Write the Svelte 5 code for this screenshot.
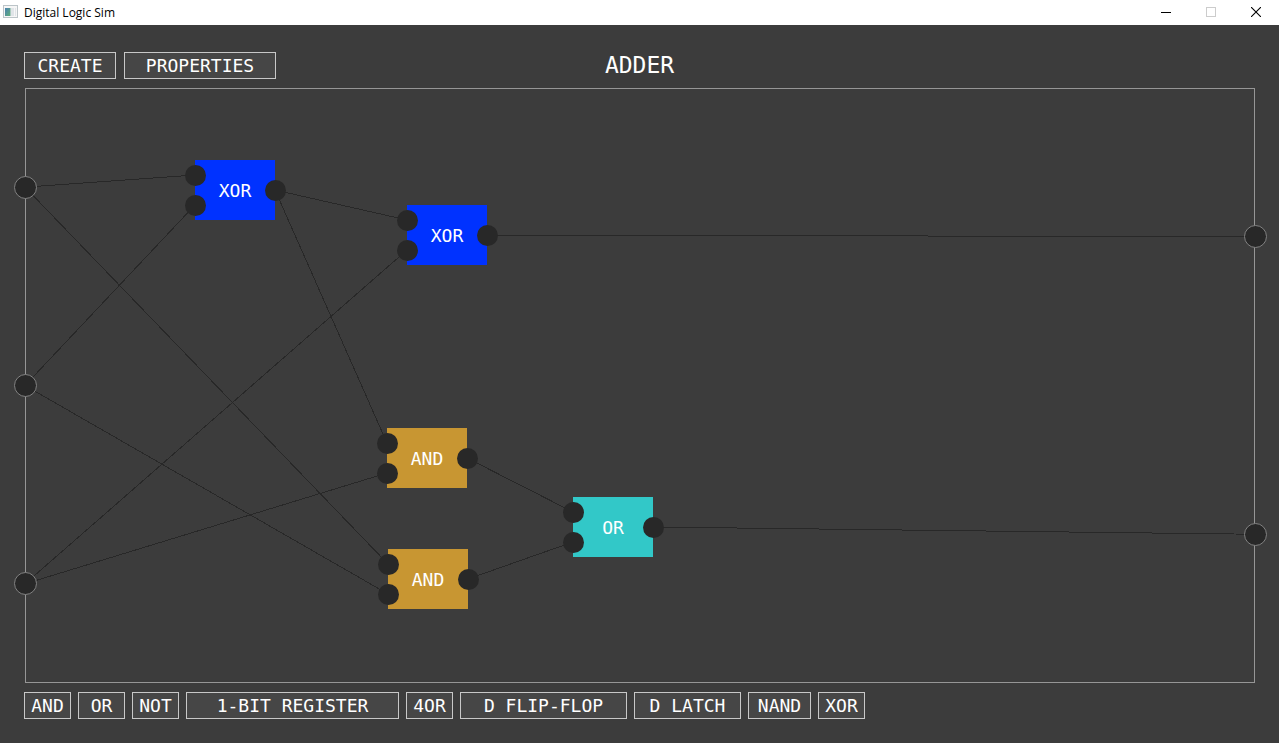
<script>
  const topButtons = [
    { label: 'CREATE', width: 92 },
    { label: 'PROPERTIES', width: 152 }
  ];

  const chips = [
    { label: 'AND', width: 47 },
    { label: 'OR', width: 47 },
    { label: 'NOT', width: 47 },
    { label: '1-BIT REGISTER', width: 213 },
    { label: '4OR', width: 47 },
    { label: 'D FLIP-FLOP', width: 167 },
    { label: 'D LATCH', width: 107 },
    { label: 'NAND', width: 63 },
    { label: 'XOR', width: 47 }
  ];

  const gates = [
    { id: 'xor1', label: 'XOR', kind: 'xor', x: 170, y: 72 },
    { id: 'xor2', label: 'XOR', kind: 'xor', x: 382, y: 117 },
    { id: 'and1', label: 'AND', kind: 'and', x: 362, y: 340 },
    { id: 'and2', label: 'AND', kind: 'and', x: 363, y: 461 },
    { id: 'or1', label: 'OR', kind: 'or', x: 548, y: 409 }
  ];

  const inputs = ['Input 1', 'Input 2', 'Input 3'];
  const outputs = ['Output 1', 'Output 2'];

  // Each end is either a board terminal ("in:n", "out:n") or a gate pin ("gate:a|b|q").
  const wires = [
    ['in:0', 'xor1:a'],
    ['in:1', 'xor1:b'],
    ['xor1:q', 'xor2:a'],
    ['in:2', 'xor2:b'],
    ['xor1:q', 'and1:a'],
    ['in:2', 'and1:b'],
    ['in:0', 'and2:a'],
    ['in:1', 'and2:b'],
    ['and1:q', 'or1:a'],
    ['and2:q', 'or1:b'],
    ['xor2:q', 'out:0'],
    ['or1:q', 'out:1']
  ];

  const pinOffset = { a: [0, 15], b: [0, 45], q: [80, 30] };

  function point(ref) {
    const [owner, pin] = ref.split(':');
    if (owner === 'in') return ['0', `${((2 * +pin + 1) * 100) / (2 * inputs.length)}%`];
    if (owner === 'out') return ['100%', `${((2 * +pin + 1) * 100) / (2 * outputs.length)}%`];
    const gate = gates.find((g) => g.id === owner);
    return [gate.x + pinOffset[pin][0], gate.y + pinOffset[pin][1]];
  }

  const lines = wires.map(([from, to]) => ({ from: point(from), to: point(to) }));
</script>

<div class="window">
  <div class="titlebar">
    <svg class="app-icon" width="16" height="15" viewBox="0 0 16 15" aria-hidden="true">
      <defs>
        <linearGradient id="pane" x1="0" y1="0" x2="1" y2="1">
          <stop offset="0" stop-color="#4a7fb0" />
          <stop offset="1" stop-color="#5fae7c" />
        </linearGradient>
      </defs>
      <rect x="0.5" y="0.5" width="14" height="12" fill="#f6f6f6" stroke="#bcc4c8" />
      <rect x="2" y="3" width="5" height="8" fill="url(#pane)" />
      <rect x="7" y="3" width="1" height="8" fill="#a9cbbd" />
      <rect x="8" y="3" width="3" height="8" fill="#e0e4e8" />
      <rect x="12" y="3" width="1" height="8" fill="#e0e4e8" />
    </svg>
    <span class="app-name">Digital Logic Sim</span>
    <div class="controls">
      <button type="button" aria-label="Minimize">
        <svg width="10" height="10" viewBox="0 0 10 10"><path d="M0 5.5H10" stroke="#000" /></svg>
      </button>
      <button type="button" aria-label="Maximize" disabled>
        <svg width="10" height="10" viewBox="0 0 10 10"><rect x="0.5" y="0.5" width="9" height="9" fill="none" stroke="#ccc" /></svg>
      </button>
      <button type="button" aria-label="Close">
        <svg width="10" height="10" viewBox="0 0 10 10"><path d="M0 0L10 10M10 0L0 10" stroke="#000" stroke-width="1.1" /></svg>
      </button>
    </div>
  </div>

  <main>
    <header>
      <nav class="row top">
        {#each topButtons as b}
          <button type="button" class="box" style:width="{b.width}px">{b.label}</button>
        {/each}
      </nav>
      <h1>ADDER</h1>
    </header>

    <section class="board">
      <svg class="wires" aria-hidden="true">
        {#each lines as l}
          <line x1={l.from[0]} y1={l.from[1]} x2={l.to[0]} y2={l.to[1]} />
        {/each}
      </svg>

      <div class="terminals left">
        {#each inputs as name}
          <button type="button" class="terminal" aria-label={name}></button>
        {/each}
      </div>
      <div class="terminals right">
        {#each outputs as name}
          <button type="button" class="terminal" aria-label={name}></button>
        {/each}
      </div>

      {#each gates as g (g.id)}
        <div class="gate {g.kind}" style:left="{g.x}px" style:top="{g.y}px">
          {g.label}
          <i class="pin a"></i>
          <i class="pin b"></i>
          <i class="pin q"></i>
        </div>
      {/each}
    </section>

    <footer class="row">
      {#each chips as c}
        <button type="button" class="box" style:width="{c.width}px">{c.label}</button>
      {/each}
    </footer>
  </main>
</div>

<style>
  :global(body) {
    margin: 0;
    background: #3c3c3c;
  }

  .window {
    display: flex;
    flex-direction: column;
    min-height: 100vh;
    box-sizing: border-box;
    background: #3c3c3c;
    color: #fff;
    font: 18px/24px 'DejaVu Sans Mono', monospace;
  }

  .titlebar {
    display: flex;
    align-items: center;
    height: 25px;
    padding: 0 1px 0 3px;
    background: #fff;
    color: #000;
    font: 12px/24px 'Open Sans', sans-serif;
  }

  .app-icon {
    margin-right: 5px;
  }

  .app-name {
    flex: 1;
  }

  .controls {
    display: flex;
    align-self: flex-start;
    height: 24px;
  }

  .controls button {
    display: grid;
    place-items: center;
    width: 45px;
    padding: 0;
    border: 0;
    background: none;
  }

  .controls svg {
    display: block;
  }

  main {
    flex: 1;
    display: flex;
    flex-direction: column;
    gap: 9px;
    padding: 27px 24px 24px;
  }

  header {
    display: grid;
    grid-template-columns: 1fr auto 1fr;
    align-items: center;
    height: 27px;
  }

  h1 {
    margin: 0;
    font-size: 23px;
    line-height: 27px;
    font-weight: 400;
  }

  .row {
    display: flex;
    gap: 7px;
  }

  .top {
    gap: 8px;
  }

  .box {
    height: 27px;
    box-sizing: border-box;
    padding: 0;
    border: 1px solid #c8c8c8;
    background: #464646;
    color: inherit;
    font: inherit;
    white-space: nowrap;
  }

  .board {
    position: relative;
    flex: 1;
    min-height: 560px;
    margin-left: 1px;
    outline: 1px solid #969696;
    outline-offset: -1px;
  }

  .wires {
    position: absolute;
    inset: 0;
    width: 100%;
    height: 100%;
    overflow: visible;
  }

  .wires line {
    stroke: #282828;
    stroke-width: 1;
    shape-rendering: crispEdges;
  }

  .terminals {
    position: absolute;
    top: 0;
    bottom: 0;
    display: flex;
    flex-direction: column;
    justify-content: space-around;
  }

  .left {
    left: -11px;
  }

  .right {
    right: -12px;
  }

  .terminal {
    width: 23px;
    height: 23px;
    box-sizing: border-box;
    padding: 0;
    border: 1px solid #828282;
    border-radius: 50%;
    background: #282828;
  }

  .gate {
    position: absolute;
    width: 80px;
    height: 60px;
    line-height: 62px;
    text-align: center;
  }

  .xor {
    background: #0032ff;
  }

  .and {
    background: #c89632;
  }

  .or {
    background: #32c8c8;
  }

  .pin {
    position: absolute;
    width: 21px;
    height: 21px;
    border-radius: 50%;
    background: #282828;
  }

  .a {
    left: -10px;
    top: 5px;
  }

  .b {
    left: -10px;
    top: 35px;
  }

  .q {
    left: 70px;
    top: 20px;
  }
</style>
